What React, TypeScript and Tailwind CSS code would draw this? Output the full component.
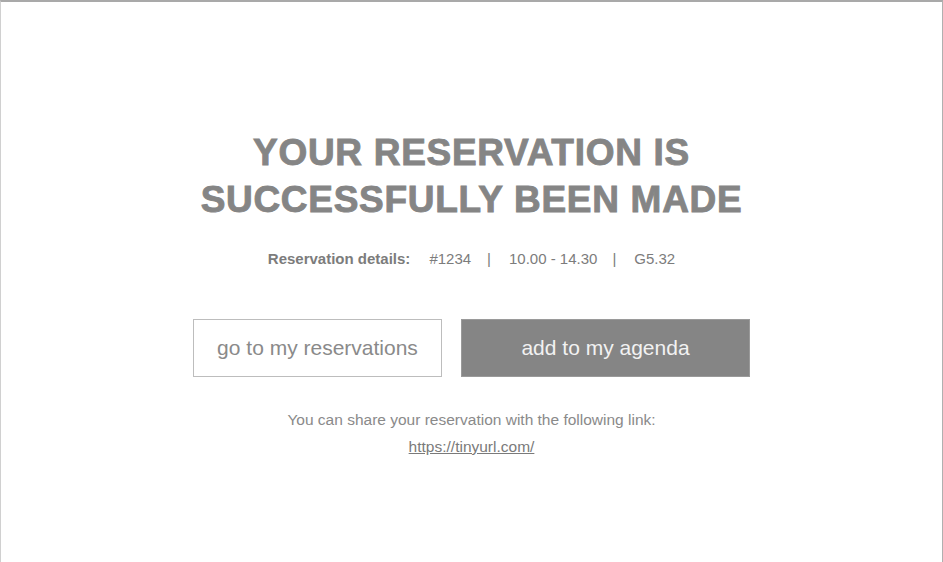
import React from "react";

export default function App() {
  return (
    <div
      className="w-[943px] h-[562px] bg-white border-t-2 border-t-[#a9a9a9] border-l border-l-[#d0d0d0] border-r border-r-[#b0b0b0] flex flex-col items-center"
      style={{ fontFamily: '"Liberation Sans", Arial, sans-serif' }}
    >
      <h1 className="mt-[127px] text-[37px] leading-[47px] font-bold text-[#858585] text-center tracking-[0.7px] [-webkit-text-stroke:0.9px_#858585]">
        YOUR RESERVATION IS
        <br />
        SUCCESSFULLY BEEN MADE
      </h1>
      <div className="mt-[26px] flex items-center text-[15px] text-[#7c7c7c] leading-[20px]">
        <span className="font-bold">Reservation details:</span>
        <span className="ml-[19px]">#1234</span>
        <span className="ml-[16px]">|</span>
        <span className="ml-[18px]">10.00 - 14.30</span>
        <span className="ml-[15px]">|</span>
        <span className="ml-[18px]">G5.32</span>
      </div>
      <div className="mt-[50px] flex gap-[19px]">
        <button className="w-[249px] h-[58px] border border-[#bdbdbd] bg-white text-[21px] text-[#8a8a8a]">
          go to my reservations
        </button>
        <button className="w-[289px] h-[58px] bg-[#858585] border border-[#9a9a9a] text-[21px] text-[#f2f2f2]">
          add to my agenda
        </button>
      </div>
      <p className="mt-[33px] text-[15.5px] leading-[20px] text-[#8a8a8a]">
        You can share your reservation with the following link:
      </p>
      <a href="#" className="mt-[7px] text-[15.5px] leading-[20px] text-[#7a7a7a] underline">
        https://tinyurl.com/
      </a>
    </div>
  );
}
